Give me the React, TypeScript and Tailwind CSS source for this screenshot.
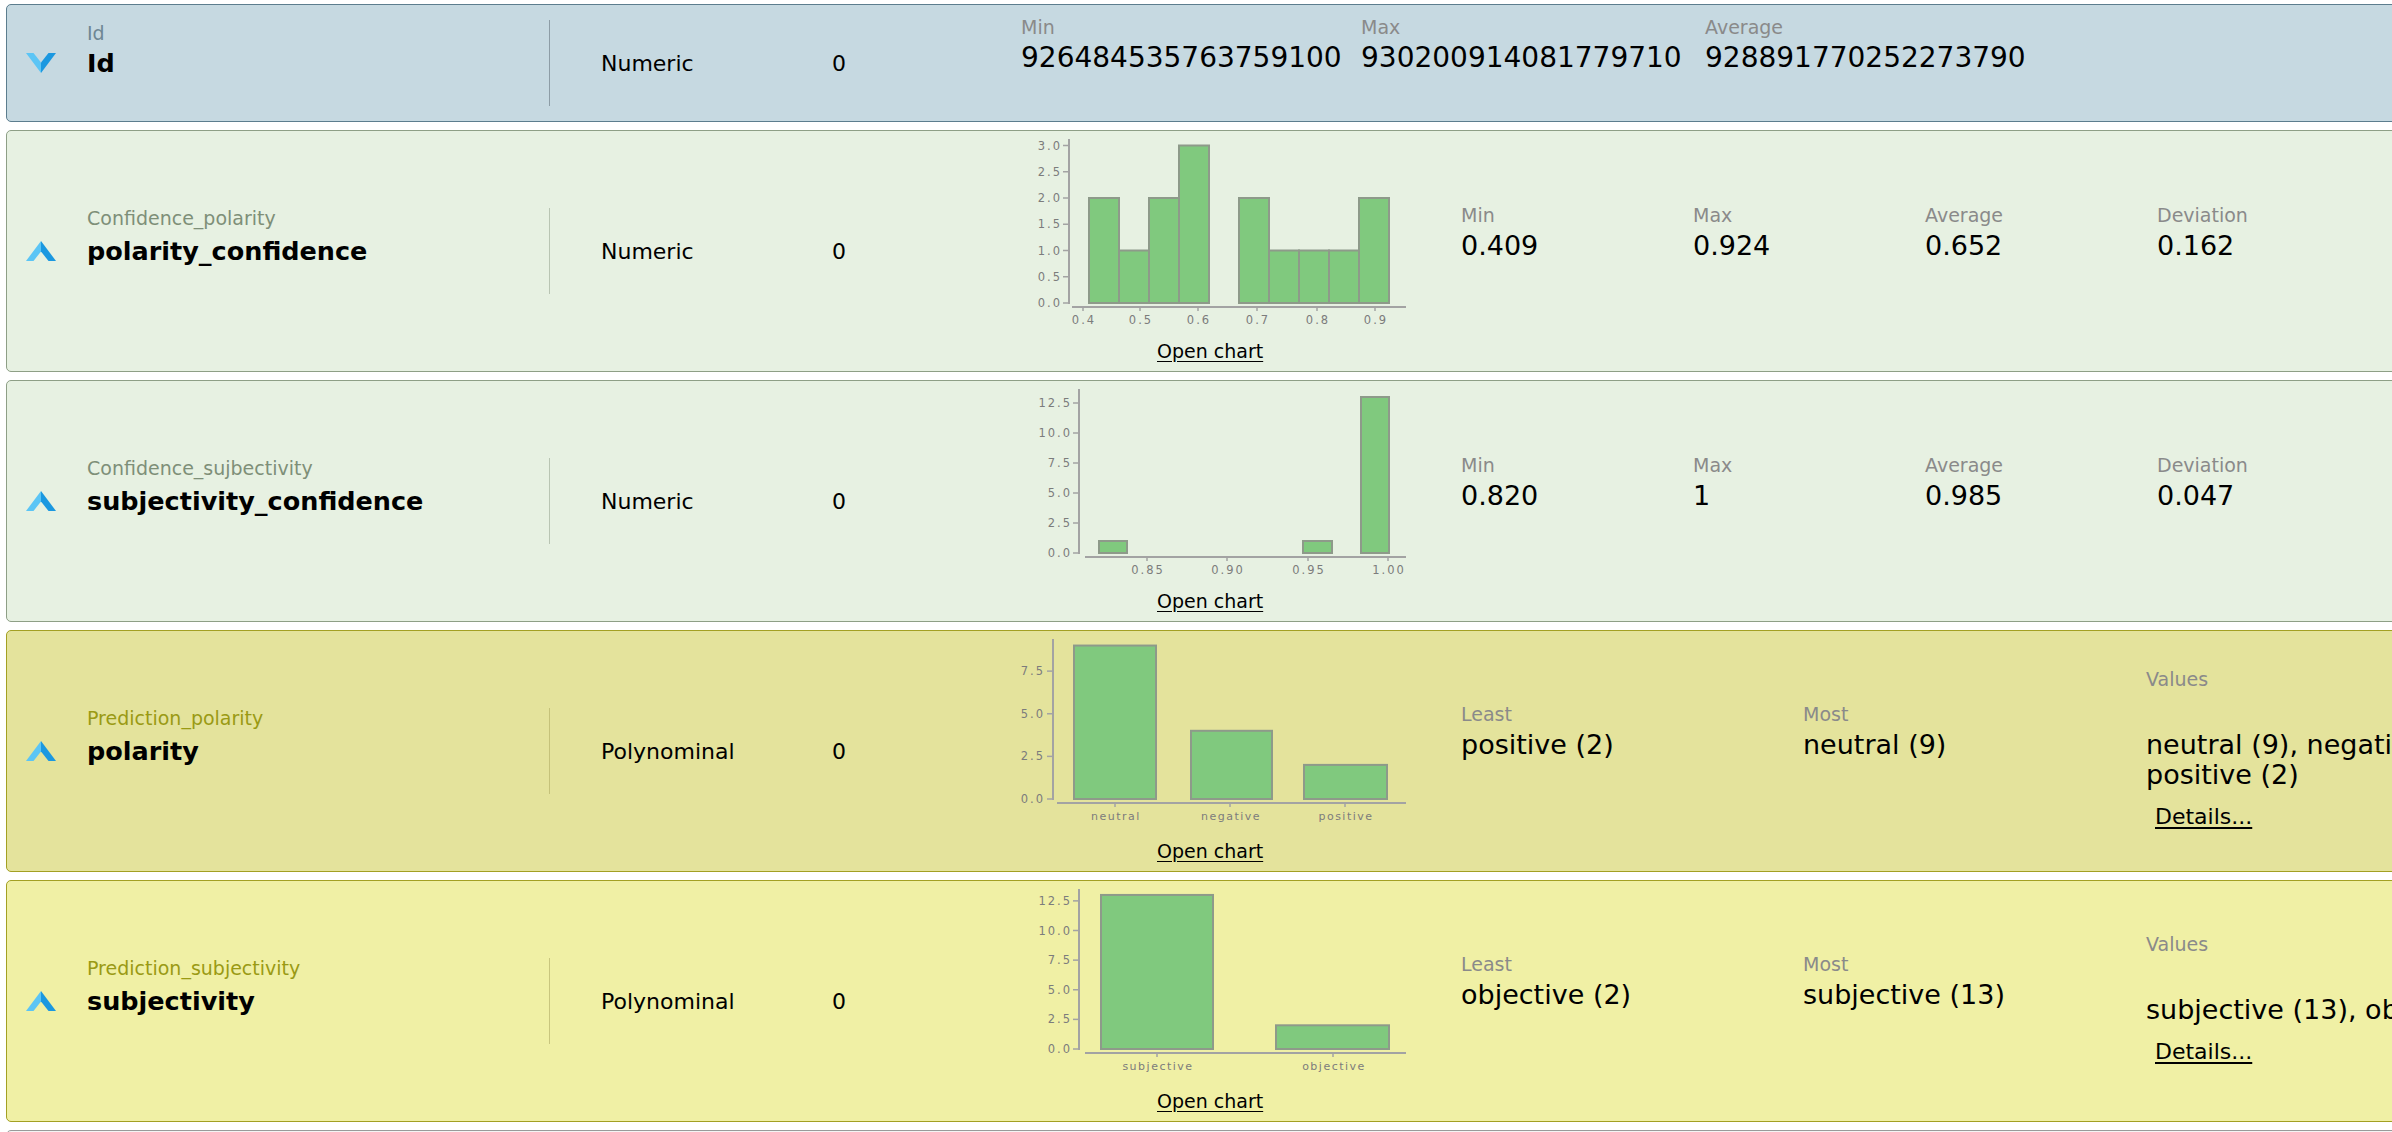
import React from "react"

type Tone = "blue" | "green" | "olive" | "yellow"

const tones: Record<Tone, { row: string; label: string; divider: string }> = {
  blue: { row: "bg-[#c6d9e1] border-[#5c7d8e]", label: "text-[#6e8794]", divider: "bg-[#8d9da6]" },
  green: { row: "bg-[#e7f1e2] border-[#8e9f86]", label: "text-[#7e8f78]", divider: "bg-[#b9c5b3]" },
  olive: { row: "bg-[#e4e39c] border-[#a3a023]", label: "text-[#9a9a14]", divider: "bg-[#c5c27a]" },
  yellow: { row: "bg-[#f0f0a5] border-[#a3a023]", label: "text-[#9a9a14]", divider: "bg-[#c9c67e]" },
}

const Chevron = ({ up }: { up: boolean }) => (
  <svg width="30" height="20" viewBox="0 0 30 20">
    {up ? (
      <>
        <polygon points="0,20 15,0 15,10.5 7.5,20" fill="#5cc5f5" />
        <polygon points="15,0 30,20 22.5,20 15,10.5" fill="#1b98e0" />
      </>
    ) : (
      <>
        <polygon points="0,0 15,20 15,9.5 7.5,0" fill="#5cc5f5" />
        <polygon points="15,20 30,0 22.5,0 15,9.5" fill="#1b98e0" />
      </>
    )}
  </svg>
)

type Bar = { x: number; w: number; v: number }
type Chart = {
  axisX: number
  axisTop: number
  baseY: number
  scale: number
  xAxisY: number
  xAxisFrom: number
  labelRight: number
  yTicks: number[]
  bars: Bar[]
  xTicks: { x: number; t: string }[]
  category?: boolean
}

const ChartSvg = ({ c }: { c: Chart }) => (
  <svg width="390" height="208" viewBox="0 0 390 208" className="overflow-visible" fontFamily="DejaVu Sans, sans-serif">
    {c.bars.map((b, i) =>
      b.v > 0 ? (
        <rect
          key={i}
          x={b.x}
          y={c.baseY - b.v * c.scale}
          width={b.w}
          height={b.v * c.scale}
          fill="#80c97e"
          stroke="#8e9a8a"
          strokeWidth="2"
        />
      ) : null
    )}
    <line x1={c.axisX} y1={c.axisTop} x2={c.axisX} y2={c.baseY + 1} stroke="#a3a3a3" strokeWidth="2" />
    <line x1={c.xAxisFrom} y1={c.xAxisY} x2={386} y2={c.xAxisY} stroke="#a3a3a3" strokeWidth="2" />
    {c.yTicks.map((v) => {
      const y = c.baseY - v * c.scale
      return (
        <g key={v}>
          <line x1={c.axisX - 6} y1={y} x2={c.axisX} y2={y} stroke="#a3a3a3" strokeWidth="1.5" />
          <text
            x={c.labelRight + 2}
            y={y}
            textAnchor="end"
            dominantBaseline="central"
            fontSize="11.5"
            letterSpacing="2"
            fill="#7c7c7c"
          >
            {v.toFixed(1)}
          </text>
        </g>
      )
    })}
    {c.xTicks.map((t) => (
      <g key={t.t}>
        <line x1={t.x} y1={c.xAxisY} x2={t.x} y2={c.xAxisY + 4} stroke="#a3a3a3" strokeWidth="1.5" />
        <text
          x={t.x + 1}
          y={c.xAxisY + 13}
          textAnchor="middle"
          dominantBaseline="central"
          fontSize={c.category ? "11" : "11.5"}
          letterSpacing={c.category ? "1.5" : "2"}
          fill="#7c7c7c"
        >
          {t.t}
        </text>
      </g>
    ))}
  </svg>
)

const charts: Record<string, Chart> = {
  polarity_confidence: {
    axisX: 49,
    axisTop: 8,
    baseY: 172,
    scale: 52.5,
    xAxisY: 176,
    xAxisFrom: 52,
    labelRight: 40,
    yTicks: [0, 0.5, 1, 1.5, 2, 2.5, 3],
    bars: [2, 1, 2, 3, 0, 2, 1, 1, 1, 2].map((v, i) => ({ x: 69 + i * 30, w: 30, v })),
    xTicks: [
      { x: 63, t: "0.4" },
      { x: 120, t: "0.5" },
      { x: 178, t: "0.6" },
      { x: 237, t: "0.7" },
      { x: 297, t: "0.8" },
      { x: 355, t: "0.9" },
    ],
  },
  subjectivity_confidence: {
    axisX: 59,
    axisTop: 8,
    baseY: 172,
    scale: 12,
    xAxisY: 176,
    xAxisFrom: 65,
    labelRight: 50,
    yTicks: [0, 2.5, 5, 7.5, 10, 12.5],
    bars: [
      { x: 79, w: 28, v: 1 },
      { x: 283, w: 29, v: 1 },
      { x: 341, w: 28, v: 13 },
    ],
    xTicks: [
      { x: 127, t: "0.85" },
      { x: 207, t: "0.90" },
      { x: 288, t: "0.95" },
      { x: 368, t: "1.00" },
    ],
  },
  polarity: {
    axisX: 33,
    axisTop: 8,
    baseY: 168,
    scale: 17.05,
    xAxisY: 172,
    xAxisFrom: 37,
    labelRight: 23,
    yTicks: [0, 2.5, 5, 7.5],
    bars: [
      { x: 54, w: 82, v: 9 },
      { x: 171, w: 81, v: 4 },
      { x: 284, w: 83, v: 2 },
    ],
    xTicks: [
      { x: 95, t: "neutral" },
      { x: 210, t: "negative" },
      { x: 325, t: "positive" },
    ],
    category: true,
  },
  subjectivity: {
    axisX: 59,
    axisTop: 8,
    baseY: 168,
    scale: 11.85,
    xAxisY: 172,
    xAxisFrom: 65,
    labelRight: 50,
    yTicks: [0, 2.5, 5, 7.5, 10, 12.5],
    bars: [
      { x: 81, w: 112, v: 13 },
      { x: 256, w: 113, v: 2 },
    ],
    xTicks: [
      { x: 137, t: "subjective" },
      { x: 313, t: "objective" },
    ],
    category: true,
  },
}

const Stat = ({ label, value, big }: { label: string; value: string; big?: boolean }) => (
  <div className="flex flex-col">
    <div className="text-[19px] leading-[24px] text-[#8a8a8a]">{label}</div>
    <div className={`mt-[2px] leading-[34px] text-black ${big ? "text-[28px]" : "text-[27px]"}`}>{value}</div>
  </div>
)

type RowProps = {
  tone: Tone
  up: boolean
  role: string
  name: string
  type: string
  compact?: boolean
  chart?: string
  children: React.ReactNode
}

const Row = ({ tone, up, role, name, type, compact, chart, children }: RowProps) => {
  const t = tones[tone]
  return (
    <div
      className={`flex w-[2700px] shrink-0 items-center rounded-[5px] border ${t.row} ${
        compact ? "h-[118px]" : "h-[242px]"
      }`}
    >
      <div className="ml-[19px] flex w-[30px]">
        <Chevron up={up} />
      </div>
      <div className={`ml-[31px] flex w-[462px] flex-col ${compact ? "pb-[26px]" : "pb-[29px]"}`}>
        <div className={`text-[19px] leading-[24px] ${t.label} ${compact ? "mb-[2px]" : "mb-[5px]"}`}>{role}</div>
        <div className="text-[25.5px] font-bold leading-[32px] text-black">{name}</div>
      </div>
      <div className={`h-[86px] w-px ${t.divider}`} />
      <div className="ml-[51px] w-[231px] text-[22px] text-black">{type}</div>
      <div className="w-[188px] text-[22px] text-black">0</div>
      {chart ? (
        <div className="flex w-[390px] flex-col self-start">
          <ChartSvg c={charts[chart]} />
          <div className="pl-[137px] text-[19px] leading-[24px] text-black underline underline-offset-[3px]">
            Open chart
          </div>
        </div>
      ) : null}
      {children}
    </div>
  )
}

const Nominal = ({ least, most, values }: { least: string; most: string; values: string }) => (
  <div className="ml-[51px] flex items-center">
    <div className="flex w-[342px] pb-[38px]">
      <Stat label="Least" value={least} />
    </div>
    <div className="flex w-[343px] pb-[38px]">
      <Stat label="Most" value={most} />
    </div>
    <div className="flex w-[420px] flex-col pb-[6px]">
      <div className="text-[19px] leading-[24px] text-[#8a8a8a]">Values</div>
      <div className="mt-[39px] text-[27px] leading-[30px] text-black">{values}</div>
      <div className="ml-[9px] mt-[14px] text-[22px] leading-[26px] text-black underline decoration-2 underline-offset-[3px]">
        Details...
      </div>
    </div>
  </div>
)

const Numeric = ({ vals }: { vals: string[] }) => (
  <div className="ml-[51px] flex pb-[36px]">
    {["Min", "Max", "Average", "Deviation"].map((l, i) => (
      <div key={l} className="w-[232px]">
        <Stat label={l} value={vals[i]} />
      </div>
    ))}
  </div>
)

export default function App() {
  return (
    <div className="h-[1132px] w-[2392px] overflow-hidden bg-white pl-[6px] pt-[4px] font-['DejaVu_Sans','Liberation_Sans',sans-serif]">
      <div className="flex flex-col gap-[8px]">
        <Row tone="blue" up={false} role="Id" name="Id" type="Numeric" compact>
          <div className="ml-px flex pb-[36px]">
            <div className="w-[340px]">
              <Stat label="Min" value="926484535763759100" big />
            </div>
            <div className="w-[344px]">
              <Stat label="Max" value="930200914081779710" big />
            </div>
            <div className="w-[344px]">
              <Stat label="Average" value="928891770252273790" big />
            </div>
          </div>
        </Row>
        <Row tone="green" up role="Confidence_polarity" name="polarity_confidence" type="Numeric" chart="polarity_confidence">
          <Numeric vals={["0.409", "0.924", "0.652", "0.162"]} />
        </Row>
        <Row
          tone="green"
          up
          role="Confidence_sujbectivity"
          name="subjectivity_confidence"
          type="Numeric"
          chart="subjectivity_confidence"
        >
          <Numeric vals={["0.820", "1", "0.985", "0.047"]} />
        </Row>
        <Row tone="olive" up role="Prediction_polarity" name="polarity" type="Polynominal" chart="polarity">
          <Nominal least="positive (2)" most="neutral (9)" values="neutral (9), negative (4), positive (2)" />
        </Row>
        <Row tone="yellow" up role="Prediction_subjectivity" name="subjectivity" type="Polynominal" chart="subjectivity">
          <Nominal least="objective (2)" most="subjective (13)" values="subjective (13), objective (2)" />
        </Row>
        <div className="h-[242px] w-[2700px] shrink-0 rounded-[5px] border border-[#9a9a9a] bg-[#f4f4f4]" />
      </div>
    </div>
  )
}
